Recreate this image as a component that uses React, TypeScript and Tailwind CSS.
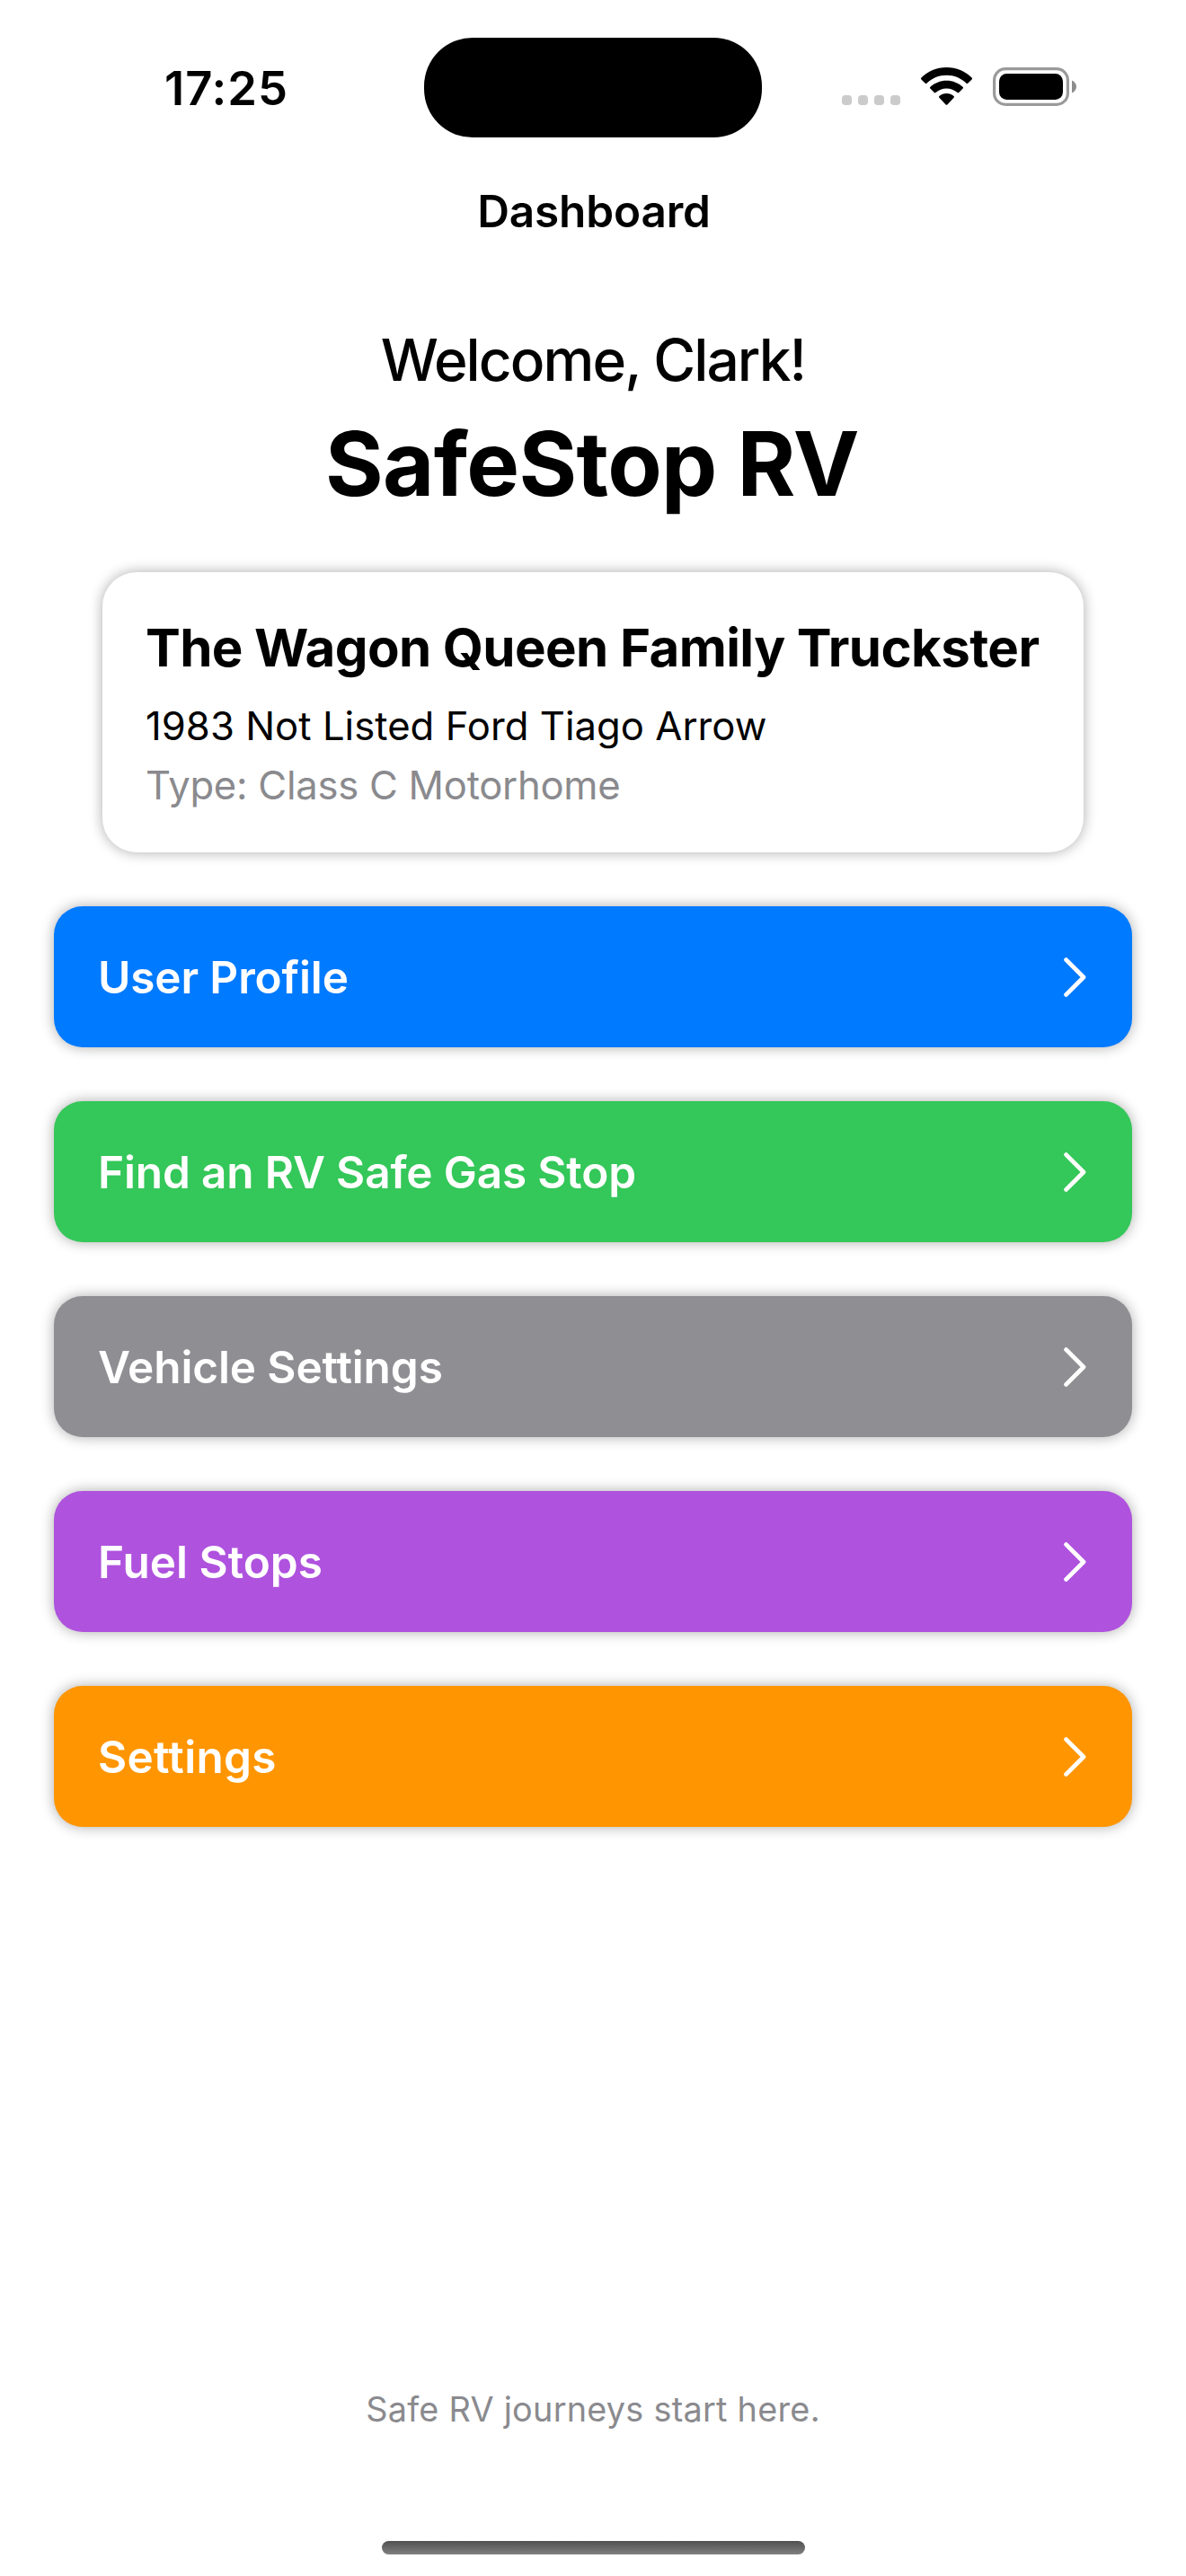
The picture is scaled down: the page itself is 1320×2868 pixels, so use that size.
type MenuItem = { label: string; color: string; tracking: string };

const menuItems: MenuItem[] = [
  { label: "User Profile", color: "bg-[#007aff]", tracking: "tracking-[-0.13px]" },
  { label: "Find an RV Safe Gas Stop", color: "bg-[#34c759]", tracking: "tracking-[-0.15px]" },
  { label: "Vehicle Settings", color: "bg-[#8e8e93]", tracking: "tracking-[-0.11px]" },
  { label: "Fuel Stops", color: "bg-[#af52de]", tracking: "tracking-[0.01px]" },
  { label: "Settings", color: "bg-[#ff9500]", tracking: "tracking-[0.32px]" },
];

function CellularDots() {
  return (
    <svg width="65" height="43" viewBox="0 0 65 43" fill="#cbcbcb">
      {[0, 18, 36, 54].map((x) => (
        <rect key={x} x={x} y="31" width="11" height="11" rx="3.8" />
      ))}
    </svg>
  );
}

function WifiIcon() {
  return (
    <svg width="57" height="43" viewBox="0 0 57 43">
      <path d="M28.5 0 C39.5 0 49.5 4.3 56.6 11.6 Q57.4 12.5 56.6 13.4 L52.2 17.8 Q51.4 18.5 50.6 17.8 C44.8 12.1 37 8.8 28.5 8.8 C20 8.8 12.2 12.1 6.4 17.8 Q5.6 18.5 4.8 17.8 L0.4 13.4 Q-0.4 12.5 0.4 11.6 C7.5 4.3 17.5 0 28.5 0 Z" />
      <path d="M28.5 14.8 C35.5 14.8 41.8 17.5 46.6 21.8 Q47.5 22.7 46.7 23.6 L42.2 28 Q41.4 28.8 40.5 28 C37.3 25.1 33.1 23.4 28.5 23.4 C23.9 23.4 19.7 25.1 16.5 28 Q15.6 28.8 14.8 28 L10.3 23.6 Q9.5 22.7 10.4 21.8 C15.2 17.5 21.5 14.8 28.5 14.8 Z" />
      <path d="M28.5 29 C31.6 29 34.5 30.1 36.6 31.9 Q37.5 32.8 36.6 33.7 L29.4 41.4 Q28.5 42.3 27.6 41.4 L20.4 33.7 Q19.5 32.8 20.4 31.9 C22.5 30.1 25.4 29 28.5 29 Z" />
    </svg>
  );
}

function BatteryIcon() {
  return (
    <svg width="93" height="43" viewBox="0 0 93 43">
      <rect x="1.6" y="1.6" width="81.8" height="39.8" rx="12.5" fill="none" stroke="#9a9a9a" strokeWidth="3.2" />
      <rect x="7" y="7" width="71" height="29" rx="8.5" fill="#000" />
      <path d="M88 14.5 C91.2 16 93 18.6 93 21.5 C93 24.4 91.2 27 88 28.5 Z" fill="#8c8c8c" />
    </svg>
  );
}

function Chevron() {
  return (
    <svg className="mt-px" width="25" height="44" viewBox="0 0 25 44" fill="none" stroke="#fff" strokeWidth="4.8" strokeLinecap="round" strokeLinejoin="round">
      <path d="M2.6 2.6 L22 22 L2.6 41.4" />
    </svg>
  );
}

function StatusBar() {
  return (
    <div className="flex h-[194px] shrink-0 items-center">
      <div className="mt-[2px] w-[472px] pl-[183px] text-[52.5px] leading-none font-semibold tracking-[0.97px]">17:25</div>
      <div className="h-[111px] w-[376px] rounded-[54px] bg-black" />
      <div className="mb-px flex w-[472px] items-center gap-[23px] pl-[89px]">
        <CellularDots />
        <WifiIcon />
        <BatteryIcon />
      </div>
    </div>
  );
}

export default function App() {
  return (
    <div className="flex h-[2868px] w-[1320px] flex-col bg-white font-['Inter',sans-serif] text-black">
      <StatusBar />

      <header className="h-[82px] pl-[2px] text-center text-[49.5px] leading-[82px] font-semibold tracking-[-0.15px]">Dashboard</header>

      <main className="flex flex-1 flex-col">
        <p className="mt-[85px] text-center text-[64px] leading-[80px] font-medium tracking-[-1.91px]">Welcome, Clark!</p>
        <h1 className="mt-[15px] pr-[2px] text-center text-[98.8px] leading-[120px] font-bold tracking-[-0.65px]">SafeStop RV</h1>

        <section className="mx-[114px] mt-[61px] rounded-[38px] bg-white p-12 shadow-[0_0_15px_rgba(0,0,0,0.33)]">
          <h2 className="text-[58.2px] leading-[72px] font-bold tracking-[-0.6px] whitespace-nowrap">The Wagon Queen Family Truckster</h2>
          <p className="mt-[25px] text-[43.6px] leading-[54px] tracking-[0.05px]">1983 Not Listed Ford Tiago Arrow</p>
          <p className="mt-3 -mb-px text-[43.6px] leading-[54px] tracking-[-0.25px] text-[#8a8a8e]">Type: Class C Motorhome</p>
        </section>

        <nav className="mx-[60px] mt-[60px] flex flex-col gap-[60px]">
          {menuItems.map((item) => (
            <button
              key={item.label}
              className={`flex h-[157px] items-center justify-between rounded-[32px] pr-[51px] pl-[49px] text-[49.5px] font-semibold text-white shadow-[0_0_15px_rgba(0,0,0,0.33)] ${item.color}`}
            >
              <span className={`mt-px ${item.tracking}`}>{item.label}</span>
              <Chevron />
            </button>
          ))}
        </nav>

        <footer className="mt-auto flex flex-col items-center">
          <p className="text-[37.8px] leading-[48px] tracking-[0.26px] text-[#8a8a8e]">Safe RV journeys start here.</p>
          <div className="mt-[123px] mb-6 h-[15px] w-[471px] rounded-full bg-linear-to-b from-[#505050] to-[#808080]" />
        </footer>
      </main>
    </div>
  );
}
